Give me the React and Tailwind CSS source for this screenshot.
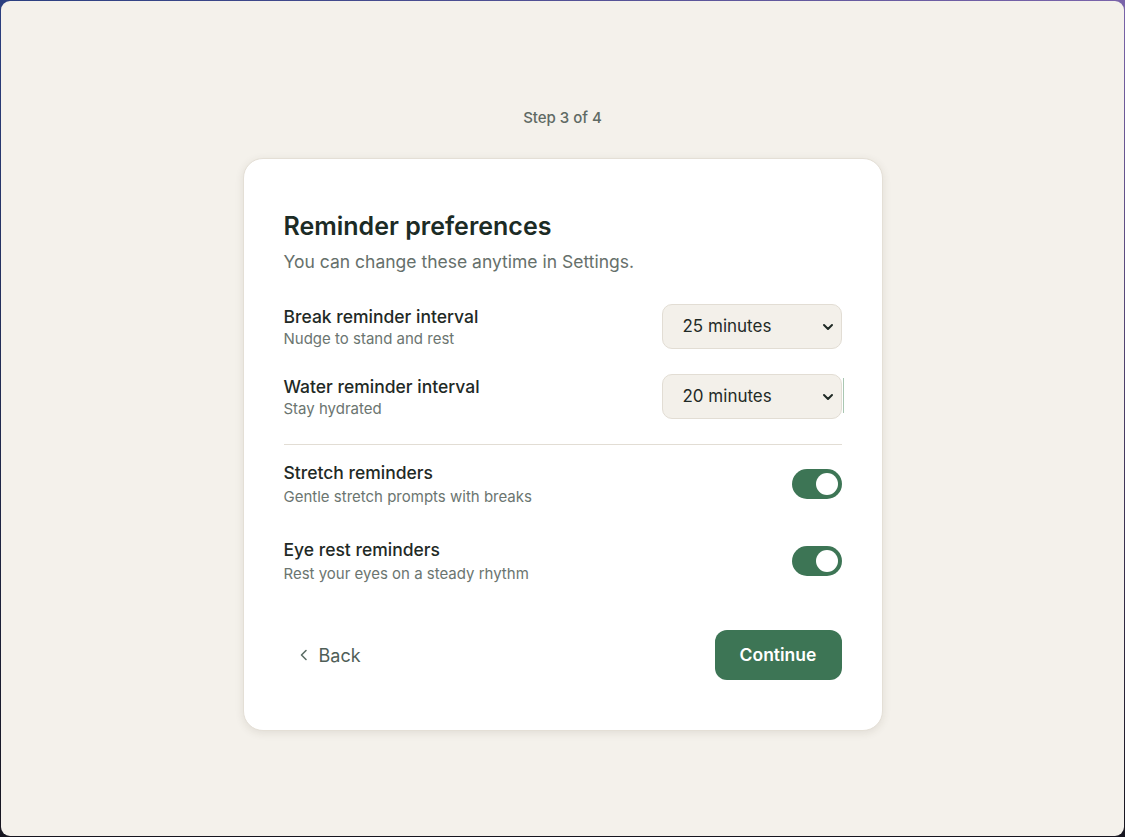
import React, { useState } from "react";

function Chevron() {
  return (
    <svg className="pointer-events-none absolute right-[8px] top-1/2 -translate-y-1/2" width="12" height="8" viewBox="0 0 12 8" fill="none">
      <path d="M2 2l4 4 4-4" stroke="#1f2a26" strokeWidth="2" strokeLinecap="round" strokeLinejoin="round" />
    </svg>
  );
}

function Select({ value, options, extra }) {
  return (
    <div className="relative w-[180px] shrink-0">
      <select
        defaultValue={value}
        className="h-[45px] w-full appearance-none rounded-[10px] border border-[#e2ddd4] bg-[#f3f0ea] pl-5 pr-8 text-[17px] text-[#1f2a26] outline-none"
      >
        {options.map((o) => (
          <option key={o}>{o}</option>
        ))}
      </select>
      <Chevron />
      {extra && <div className="absolute right-[-2px] top-[4px] h-[35px] w-px bg-[#a9c7b2]" />}
    </div>
  );
}

function Toggle() {
  const [on, setOn] = useState(true);
  return (
    <button
      onClick={() => setOn(!on)}
      className={`relative h-[30px] w-[50px] shrink-0 rounded-full ${on ? "bg-[#3d7555]" : "bg-[#d6d1c8]"}`}
    >
      <span className={`absolute top-[4px] h-[22px] w-[22px] rounded-full bg-white ${on ? "left-[24px]" : "left-[4px]"}`} />
    </button>
  );
}

export default function App() {
  const mins = ["15 minutes", "20 minutes", "25 minutes", "30 minutes", "45 minutes", "60 minutes"];
  return (
    <div
      className="h-screen w-full p-px bg-[linear-gradient(to_bottom,rgba(20,18,30,0)_0%,#16151f_100%),linear-gradient(to_right,#2b3f80,#7a64aa)]"
      style={{ fontFamily: "Inter, 'Noto Sans', sans-serif" }}
    >
      <div className="flex h-full w-full flex-col items-center justify-center rounded-[9px] bg-[#f4f1eb]">
        <div className="pt-[2px] text-[15px] font-medium leading-5 text-[#5f6a64]">Step 3 of 4</div>
        <div className="mt-[30px] w-[640px] rounded-[20px] border border-[#e4dfd6] bg-white px-10 pb-[50px] pt-[51px] shadow-[0_2px_8px_rgba(60,50,30,0.10)]">
          <h1 className="text-[25px] font-semibold leading-8 text-[#1c2b25]">Reminder preferences</h1>
          <p className="mt-2 text-[17.5px] leading-6 text-[#66706b]">You can change these anytime in Settings.</p>

          <div className="mt-[30px] flex items-center justify-between">
            <div>
              <div className="text-[17.5px] font-medium leading-6 text-[#1f2a26]">Break reminder interval</div>
              <div className="text-[15px] leading-5 text-[#6b7570]">Nudge to stand and rest</div>
            </div>
            <Select value="25 minutes" options={mins} />
          </div>

          <div className="mt-[25px] flex items-center justify-between">
            <div>
              <div className="text-[17.5px] font-medium leading-6 text-[#1f2a26]">Water reminder interval</div>
              <div className="text-[15px] leading-5 text-[#6b7570]">Stay hydrated</div>
            </div>
            <Select value="20 minutes" options={mins} extra />
          </div>

          <div className="mt-[25px] h-px bg-[#e2ddd4]" />

          <div className="mt-[16px] flex items-center justify-between">
            <div>
              <div className="text-[17.5px] font-medium leading-6 text-[#1f2a26]">Stretch reminders</div>
              <div className="mt-0.5 text-[15px] leading-5 text-[#6b7570]">Gentle stretch prompts with breaks</div>
            </div>
            <Toggle />
          </div>

          <div className="mt-[31px] flex items-center justify-between">
            <div>
              <div className="text-[17.5px] font-medium leading-6 text-[#1f2a26]">Eye rest reminders</div>
              <div className="mt-0.5 text-[15px] leading-5 text-[#6b7570]">Rest your eyes on a steady rhythm</div>
            </div>
            <Toggle />
          </div>

          <div className="mt-[46px] flex items-center justify-between">
            <button className="flex items-center gap-[11px] pl-[16px] text-[18px] text-[#4f5e57]">
              <svg width="8" height="12" viewBox="0 0 8 12" fill="none">
                <path d="M6 1.5L1.5 6 6 10.5" stroke="#5d6e66" strokeWidth="1.6" strokeLinecap="round" strokeLinejoin="round" />
              </svg>
              Back
            </button>
            <button className="h-[50px] w-[127px] rounded-[12px] bg-[#3d7555] text-[17.5px] font-semibold text-white">
              Continue
            </button>
          </div>
        </div>
      </div>
    </div>
  );
}
